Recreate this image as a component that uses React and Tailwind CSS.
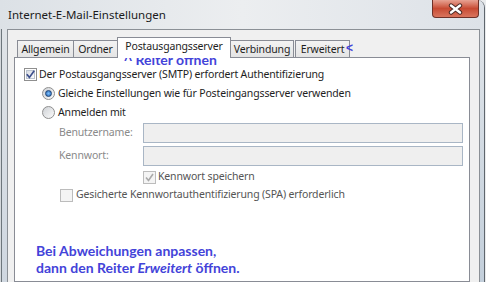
import React from "react";

function Check({ checked, disabled }) {
  return (
    <span
      className={
        disabled
          ? "flex h-[13px] w-[13px] shrink-0 items-center justify-center border border-[#bcbcbc] bg-[#f4f4f4]"
          : "flex h-[13px] w-[13px] shrink-0 items-center justify-center border border-[#8f8f8f] bg-white p-px"
      }
    >
      {disabled ? (
        checked ? (
          <svg width="9" height="9" viewBox="0 0 9 9">
            <path d="M1 4.5 L3.5 7.5 L8 1" fill="none" stroke="#a9a9a9" strokeWidth="1.6" />
          </svg>
        ) : null
      ) : (
        <span className="flex h-full w-full items-center justify-center border border-[#bcc4cf] bg-linear-to-br from-[#d9dde4] to-[#fbfbfb]">
          {checked ? (
            <svg width="9" height="9" viewBox="0 0 9 9" className="shrink-0">
              <path d="M0.8 4.3 L3.4 7.4 L8.2 0.8" fill="none" stroke="#3d4f8c" strokeWidth="1.7" />
            </svg>
          ) : null}
        </span>
      )}
    </span>
  );
}

function Radio({ checked }) {
  return (
    <span className="flex h-[13px] w-[13px] shrink-0 items-center justify-center rounded-full border border-[#8f8f8f] bg-linear-to-br from-[#cfd2d6] to-[#fbfbfb]">
      {checked ? (
        <span className="h-[7px] w-[7px] rounded-full border border-[#1f4476] bg-radial from-[#7cc0ff] to-[#2161ad]" />
      ) : null}
    </span>
  );
}

function Tab({ children, w, first }) {
  return (
    <div
      className={
        (first ? "" : "-ml-px ") +
        "flex h-[17px] shrink-0 items-start justify-center border border-b-0 border-[#898c95] bg-linear-to-b from-[#f3f3f3] to-[#e4e4e4] pt-px leading-[15px] " +
        w
      }
    >
      {children}
    </div>
  );
}

export default function App() {
  return (
    <div className="h-[282px] w-[486px] overflow-hidden bg-[#e9ebed] font-['Noto_Sans',sans-serif] text-[10.5px] tracking-[-0.15px] text-[#1e1e1e]">
      <div className="relative flex h-[282px] w-[485px] flex-col rounded-tr-[8px] border-r border-[#5f666d] bg-[#dfe4e9]">
        {/* title bar */}
        <div className="flex h-[29px] shrink-0 items-start rounded-tr-[8px] bg-linear-to-r from-[#dce1e6] via-[#eceef0] to-[#dde2e8]">
          <div className="pl-[8px] pt-[7px] text-[11.5px] leading-[16px] tracking-normal text-[#1b1b1b]">
            Internet-E-Mail-Einstellungen
          </div>
          <div className="ml-auto mr-[5px] flex h-[18px] w-[47px] items-center justify-center rounded-b-[4px] border border-t-0 border-[#6e3128] bg-linear-to-b from-[#e7a293] via-[#c74a33] to-[#d9745d]">
            <svg width="15" height="12" viewBox="0 0 15 12">
              <path d="M3 2.5 L12 9.5 M12 2.5 L3 9.5" stroke="#4b2a25" strokeWidth="4.4" strokeLinecap="round" />
              <path d="M3 2.5 L12 9.5 M12 2.5 L3 9.5" stroke="#ffffff" strokeWidth="2.4" strokeLinecap="round" />
            </svg>
          </div>
        </div>

        {/* body row */}
        <div className="flex flex-1">
          <div className="flex w-[7px] shrink-0">
            <div className="w-px bg-[#d4d8dc]" />
            <div className="w-px bg-[#6d767c]" />
            <div className="flex-1 bg-linear-to-b from-[#dfe3e7] to-[#cfd7e0]" />
          </div>

          <div className="flex flex-1 flex-col border-x border-t border-[#8b9096] bg-[#f0f0f0] pl-[6px] pr-[9px] pt-[7px]">
            {/* tabs */}
            <div className="flex h-[20px] items-end pl-[3px]">
              <Tab w="w-[57px]" first>
                Allgemein
              </Tab>
              <Tab w="w-[45px]">Ordner</Tab>
              <div className="relative z-10 -mb-px -ml-px flex h-[21px] w-[114px] shrink-0 items-start justify-center border border-b-0 border-[#898c95] bg-white pt-px leading-[14px]">
                Postausgangsserver
              </div>
              <Tab w="w-[64px]">Verbindung</Tab>
              <div className="ml-px flex h-[17px] w-[55px] shrink-0 items-start justify-center border border-b-0 border-[#898c95] bg-linear-to-b from-[#f3f3f3] to-[#e4e4e4] pt-px leading-[15px]">
                Erweitert
              </div>
            </div>

            {/* panel */}
            <div className="flex-1 border border-[#898c95] bg-white pl-[9px] pt-[7px]">
              <div className="flex h-[19px] items-center gap-[2px]">
                <Check checked />
                <span>Der Postausgangsserver (SMTP) erfordert Authentifizierung</span>
              </div>
              <div className="flex h-[19px] items-center gap-[3px] pl-[18px]">
                <Radio checked />
                <span>Gleiche Einstellungen wie für Posteingangsserver verwenden</span>
              </div>
              <div className="flex h-[19px] items-center gap-[3px] pl-[18px]">
                <Radio />
                <span>Anmelden mit</span>
              </div>
              <div className="mt-px flex h-[20px] items-center pl-[35px]">
                <span className="w-[84px] shrink-0 text-[#8a8a8a]">Benutzername:</span>
                <div className="h-[20px] w-[320px] border border-[#a9b6c5] bg-[#efefef]" />
              </div>
              <div className="mt-[3px] flex h-[20px] items-center pl-[35px]">
                <span className="w-[84px] shrink-0 text-[#8a8a8a]">Kennwort:</span>
                <div className="h-[20px] w-[320px] border border-[#a9b6c5] bg-[#efefef]" />
              </div>
              <div className="mt-[2px] flex h-[18px] items-center gap-[2px] pl-[119px]">
                <Check checked disabled />
                <span className="text-[#555555]">Kennwort speichern</span>
              </div>
              <div className="flex h-[18px] items-center gap-[3px] pl-[36px]">
                <Check disabled />
                <span className="text-[#555555]">
                  Gesicherte Kennwortauthentifizierung (SPA) erforderlich
                </span>
              </div>
              <div className="mt-[38px] pl-[12px] font-['Lato',sans-serif] text-[14px] font-bold leading-[17px] tracking-normal text-[#4343d9]">
                <div>Bei Abweichungen anpassen,</div>
                <div>
                  dann den Reiter <em>Erweitert</em> öffnen.
                </div>
              </div>
            </div>
          </div>

          <div className="w-[4px] shrink-0 bg-linear-to-b from-[#dfe4e9] to-[#c3cfdb]" />
        </div>

        {/* annotations */}
        <div className="absolute left-[124px] top-[55px] font-['Lato',sans-serif] text-[14px] font-bold leading-[10px] tracking-normal text-[#4343d9]">
          <span className="font-['Liberation_Sans',sans-serif]">^</span> Reiter öffnen
        </div>
        <div className="absolute left-[346px] top-[42px] font-['Liberation_Sans',sans-serif] text-[12px] font-bold leading-[12px] tracking-normal text-[#4343d9]">
          &lt;
        </div>
      </div>
    </div>
  );
}
